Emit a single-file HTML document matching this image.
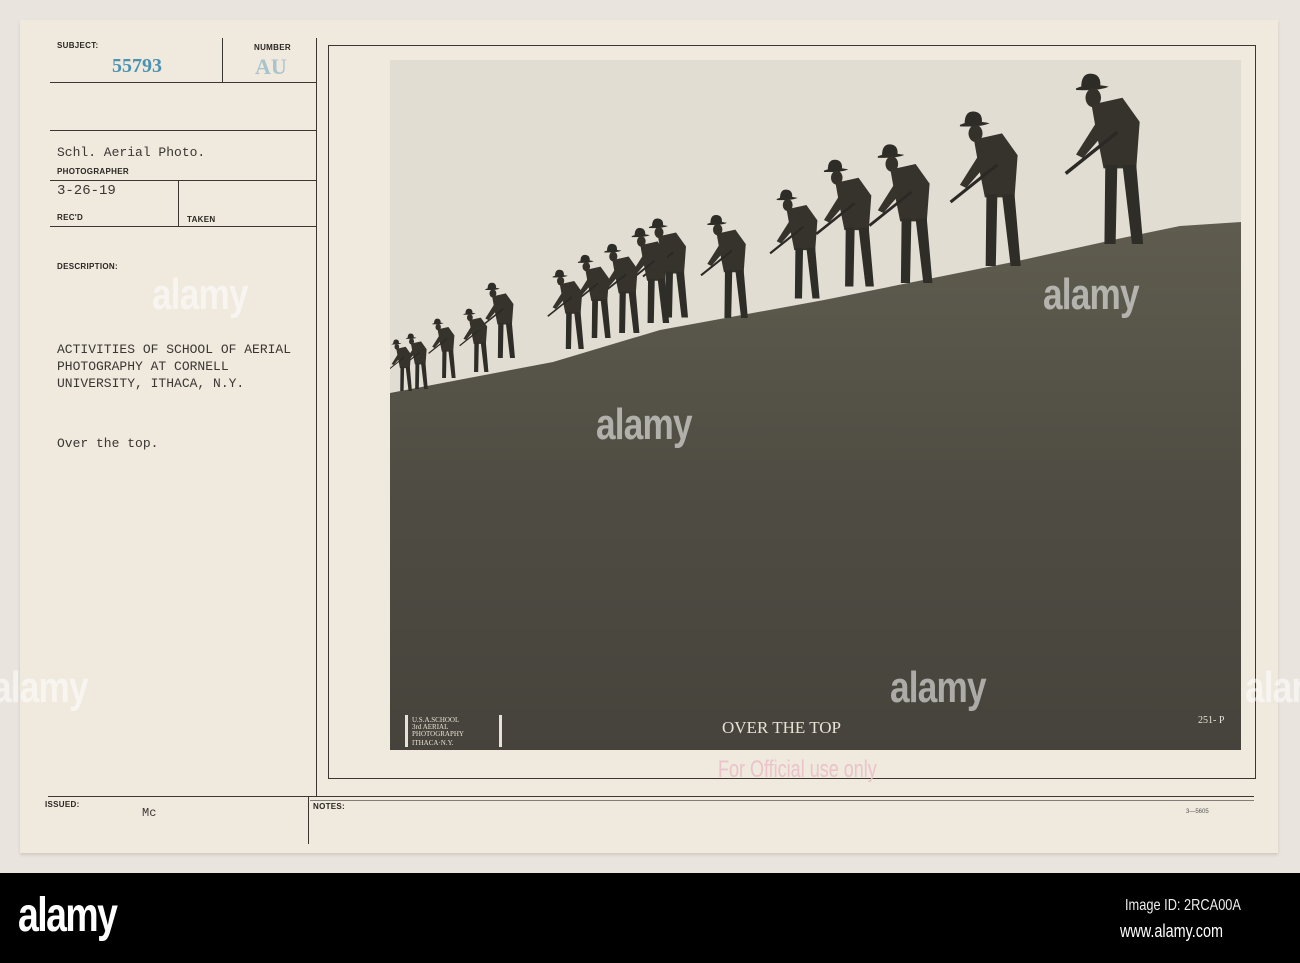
<!DOCTYPE html>
<html><head><meta charset="utf-8"><style>
body{margin:0;width:1300px;height:963px;background:#e9e5de;position:relative;overflow:hidden;font-family:"Liberation Sans",sans-serif}
.card{position:absolute;left:20px;top:20px;width:1258px;height:833px;background:#efe9de;box-shadow:0 2px 3px #cfc9bf}
.l{position:absolute;background:#3a3632}
.lab{position:absolute;font:bold 8px "Liberation Sans Narrow","Liberation Sans",sans-serif;color:#2a2622;letter-spacing:.3px}
.ty{position:absolute;font:13px "Liberation Mono",monospace;color:#3a3632;white-space:pre;line-height:17px}
.wm{position:absolute;font:bold 44px "Liberation Sans Narrow","Liberation Sans",sans-serif;color:rgba(255,255,255,.55);letter-spacing:-1px;transform:scaleX(.8);transform-origin:left}
</style></head><body>
<div class="card"></div>
<div class="l" style="left:50px;top:82px;width:266px;height:1px"></div>
<div class="l" style="left:222px;top:38px;width:1px;height:44px"></div>
<div class="l" style="left:50px;top:130px;width:266px;height:1px"></div>
<div class="l" style="left:50px;top:180px;width:266px;height:1px"></div>
<div class="l" style="left:178px;top:180px;width:1px;height:46px"></div>
<div class="l" style="left:50px;top:226px;width:266px;height:1px"></div>
<div class="l" style="left:316px;top:38px;width:1px;height:758px"></div>
<div class="l" style="left:48px;top:796px;width:1206px;height:1px"></div>
<div class="l" style="left:308px;top:796px;width:1px;height:48px"></div>
<div class="l" style="left:310px;top:800px;width:944px;height:1px;opacity:.6"></div>
<div style="position:absolute;left:328px;top:45px;width:926px;height:732px;border:1px solid #3a3632"></div>
<div class="lab" style="left:57px;top:41px">SUBJECT:</div>
<div class="lab" style="left:254px;top:43px">NUMBER</div>
<div style="position:absolute;left:112px;top:55px;font:bold 20px 'Liberation Serif',serif;color:#4a93b3">55793</div>
<div style="position:absolute;left:255px;top:54px;font:bold 22px 'Liberation Serif',serif;color:#a9c3cc">AU</div>
<div class="ty" style="left:57px;top:144px">Schl. Aerial Photo.</div>
<div class="lab" style="left:57px;top:167px">PHOTOGRAPHER</div>
<div class="ty" style="left:57px;top:183px;font-size:14px">3-26-19</div>
<div class="lab" style="left:57px;top:213px">REC'D</div>
<div class="lab" style="left:187px;top:215px">TAKEN</div>
<div class="lab" style="left:57px;top:262px">DESCRIPTION:</div>
<div class="ty" style="left:57px;top:341px">ACTIVITIES OF SCHOOL OF AERIAL
PHOTOGRAPHY AT CORNELL
UNIVERSITY, ITHACA, N.Y.</div>
<div class="ty" style="left:57px;top:435px">Over the top.</div>
<div class="lab" style="left:45px;top:800px">ISSUED:</div>
<div class="ty" style="left:142px;top:805px;font-size:12px">Mc</div>
<div class="lab" style="left:313px;top:802px">NOTES:</div>
<div style="position:absolute;left:1186px;top:809px;font:6px sans-serif;color:#555">3—5605</div>
<svg style="position:absolute;left:390px;top:60px" width="851" height="690" viewBox="390 60 851 690">
<defs>
<linearGradient id="hill" x1="0" y1="0" x2="0" y2="1"><stop offset="0" stop-color="#5f5c4f"/><stop offset=".5" stop-color="#4f4d43"/><stop offset="1" stop-color="#45433b"/></linearGradient>
<symbol id="s" viewBox="0 0 100 200">
<path d="M14 19 Q30 12 52 17 Q42 22 14 21Z M20 18 Q20 1 32 2 Q44 3 42 18Z" fill="#2e2c27"/>
<ellipse cx="34" cy="30" rx="9" ry="11" fill="#34312b"/>
<path d="M32 38 L68 30 L88 58 L84 112 L46 112 L38 72Z" fill="#36332d"/>
<path d="M38 58 L14 96 L22 100 L48 70Z" fill="#36332d"/>
<path d="M48 108 L62 108 L60 200 L47 200Z M68 108 L84 108 L92 200 L79 200Z" fill="#2f2d28"/>
<line x1="2" y1="118" x2="62" y2="70" stroke="#2b2925" stroke-width="4"/>
</symbol>
</defs>
<rect x="390" y="60" width="851" height="690" fill="#e2ddd3"/>
<path d="M390 393 L553 362 L660 330 L824 300 L1013 262 L1122 238 L1180 226 L1241 222 L1241 750 L390 750Z" fill="url(#hill)"/>
<g>
<use href="#s" x="1062" y="72" width="90" height="172"/>
<use href="#s" x="949" y="109" width="78" height="158"/>
<use href="#s" x="868" y="142" width="70" height="142"/>
<use href="#s" x="815" y="155" width="64" height="135"/>
<use href="#s" x="769" y="185" width="55" height="117"/>
<use href="#s" x="700" y="212" width="52" height="108"/>
<use href="#s" x="642" y="215" width="50" height="105"/>
<use href="#s" x="625" y="225" width="48" height="100"/>
<use href="#s" x="598" y="242" width="45" height="92"/>
<use href="#s" x="572" y="252" width="42" height="88"/>
<use href="#s" x="547" y="268" width="40" height="82"/>
<use href="#s" x="480" y="280" width="38" height="80"/>
<use href="#s" x="459" y="307" width="32" height="66"/>
<use href="#s" x="428" y="317" width="30" height="62"/>
<use href="#s" x="402" y="331" width="28" height="60"/>
<use href="#s" x="388" y="337" width="26" height="56"/>
</g>
<g fill="#e8e2d6" font-family="Liberation Serif,serif">
<text x="722" y="733" font-size="17">OVER THE TOP</text>
<text x="1198" y="723" font-size="10">251- P</text>
<rect x="405" y="715" width="3" height="32"/><rect x="499" y="715" width="3" height="32"/>
<text x="412" y="722" font-size="7">U.S.A.SCHOOL</text>
<text x="412" y="729" font-size="7">3rd AERIAL</text>
<text x="412" y="736" font-size="7">PHOTOGRAPHY</text>
<text x="412" y="745" font-size="7">ITHACA·N.Y.</text>
</g>
</svg>
<div style="position:absolute;left:718px;top:756px;font:24px 'Liberation Sans Narrow','Liberation Sans',sans-serif;color:#ebc3ca;transform:scaleX(.75);transform-origin:left">For Official use only</div>
<div class="wm" style="left:152px;top:270px">alamy</div>
<div class="wm" style="left:596px;top:400px">alamy</div>
<div class="wm" style="left:1043px;top:270px">alamy</div>
<div class="wm" style="left:890px;top:663px">alamy</div>
<div class="wm" style="left:-8px;top:663px">alamy</div>
<div class="wm" style="left:1245px;top:663px">alamy</div>
<div style="position:absolute;left:0;top:873px;width:1300px;height:90px;background:#000"></div>
<div style="position:absolute;left:18px;top:888px;font:bold 48px 'Liberation Sans Narrow','Liberation Sans',sans-serif;color:#fff;letter-spacing:-2px;transform:scaleX(.78);transform-origin:left">alamy</div>
<div style="position:absolute;left:1125px;top:897px;font:16px 'Liberation Sans Narrow','Liberation Sans',sans-serif;color:#eee;transform:scaleX(.8);transform-origin:left">Image ID: 2RCA00A</div>
<div style="position:absolute;left:1120px;top:921px;font:18px 'Liberation Sans Narrow','Liberation Sans',sans-serif;color:#fff;transform:scaleX(.8);transform-origin:left">www.alamy.com</div>
</body></html>
